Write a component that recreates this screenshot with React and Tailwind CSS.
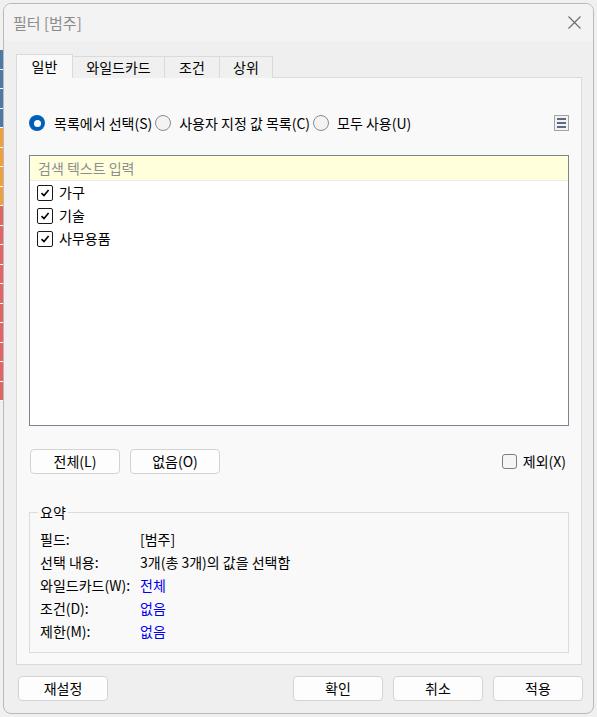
import React from 'react';

const FONT = { fontFamily: '"Noto Sans CJK KR", "Noto Sans", sans-serif' };

const TABS = [
  { label: '일반', w: 'w-[57px]', active: true },
  { label: '와일드카드', w: 'w-[93px]' },
  { label: '조건', w: 'w-[56px]' },
  { label: '상위', w: 'w-[54px]' },
];

const ITEMS = ['가구', '기술', '사무용품'];

const SUMMARY = [
  { label: '필드:', value: '[범주]' },
  { label: '선택 내용:', value: '3개(총 3개)의 값을 선택함' },
  { label: '와일드카드(W):', value: '전체', link: true },
  { label: '조건(D):', value: '없음', link: true },
  { label: '제한(M):', value: '없음', link: true },
];

function Radio({ checked }) {
  if (checked) {
    return (
      <span className="block w-[16px] h-[16px] rounded-full bg-[#005fb8] flex items-center justify-center shrink-0">
        <span className="block w-[7px] h-[7px] rounded-full bg-white" />
      </span>
    );
  }
  return <span className="block w-[16px] h-[16px] rounded-full border border-[#8a8a8a] bg-[#f3f3f3] shrink-0" />;
}

function CheckBox() {
  return (
    <span className="w-[16px] h-[16px] rounded-[2px] border border-[#1a1a1a] bg-white flex items-center justify-center shrink-0">
      <svg width="10" height="10" viewBox="0 0 10 10">
        <path d="M1.5 5.2 L4 7.6 L8.6 2" fill="none" stroke="#000" strokeWidth="1.6" />
      </svg>
    </span>
  );
}

function Btn({ children, className = '' }) {
  return (
    <button
      type="button"
      className={`h-[25px] w-[90px] rounded-[4px] border border-[#d3d3d3] bg-[#fdfdfd] text-[14px] text-black flex items-center justify-center ${className}`}
    >
      {children}
    </button>
  );
}

function LeftStrip() {
  const segs = [];
  for (let i = 0; i < 4; i++) segs.push('#4e79a7');
  for (let i = 0; i < 4; i++) segs.push('#f0a03a');
  for (let i = 0; i < 10; i++) segs.push('#e06666');
  return (
    <div className="w-[3px] flex flex-col shrink-0">
      <div className="h-[50px]" />
      {segs.map((c, i) => (
        <div key={i} className="h-[19.5px] border-b border-white" style={{ background: c }} />
      ))}
    </div>
  );
}

export default function App() {
  return (
    <div className="w-[597px] h-[717px] bg-[#f0f0f0] flex overflow-hidden" style={FONT}>
      <LeftStrip />
      <div className="mt-[3px] w-[591px] h-[711px] rounded-[8px] border border-[#b9b9b9] bg-[#efefef] flex flex-col overflow-hidden">
        {/* Title bar */}
        <div className="h-[37px] bg-[#f3f3f3] flex items-center justify-between pl-[9px] pr-[12px] shrink-0">
          <span className="text-[15px] text-[#8b8b8b] mt-[1px]">필터 [범주]</span>
          <svg width="13" height="13" viewBox="0 0 13 13">
            <path d="M0.5 0.5 L12.5 12.5 M12.5 0.5 L0.5 12.5" stroke="#6a6a6a" strokeWidth="1.1" />
          </svg>
        </div>

        {/* Tabs */}
        <div className="mt-[13px] ml-[12px] flex items-end h-[24px] relative z-10">
          {TABS.map(t => (
            <div
              key={t.label}
              className={`${t.w} flex items-center justify-center text-[14px] text-black border border-[#dadada] -ml-px first:ml-0 ${
                t.active ? 'h-[24px] bg-[#f9f9f9] border-b-[#f9f9f9]' : 'h-[22px] bg-[#f0f0f0] border-b-0'
              }`}
            >
              {t.label}
            </div>
          ))}
        </div>

        {/* Tab panel */}
        <div className="-mt-px ml-[12px] mr-[11px] h-[588px] border border-[#dadada] bg-[#f9f9f9] flex flex-col pl-[12px] pr-[12px]">
          {/* Radio row */}
          <div className="mt-[35px] h-[20px] flex items-center text-[14px] text-black">
            <Radio checked />
            <span className="ml-[9px]">목록에서 선택(S)</span>
            <span className="ml-[3px]"><Radio /></span>
            <span className="ml-[8px]">사용자 지정 값 목록(C)</span>
            <span className="ml-[3px]"><Radio /></span>
            <span className="ml-[8px]">모두 사용(U)</span>
            <div className="ml-auto w-[15px] h-[16px] border border-[#a3a3a3] bg-[#f2f2f2] flex flex-col items-center justify-center gap-[2px]">
              <span className="block w-[9px] h-[2px] bg-[#5d6b80]" />
              <span className="block w-[9px] h-[2px] bg-[#5d6b80]" />
              <span className="block w-[9px] h-[2px] bg-[#5d6b80]" />
            </div>
          </div>

          {/* List box */}
          <div className="mt-[22px] h-[271px] border border-[#7f8494] bg-white flex flex-col">
            <div className="h-[25px] bg-[#ffffdc] border-b border-[#ececec] flex items-center px-[8px] text-[14px] text-[#8d8d8d]">
              검색 텍스트 입력
            </div>
            <div className="flex flex-col">
              {ITEMS.map(it => (
                <div key={it} className="h-[23px] flex items-center pl-[7px] gap-[6px] text-[14px] text-black">
                  <CheckBox />
                  <span>{it}</span>
                </div>
              ))}
            </div>
          </div>

          {/* All / None / Exclude */}
          <div className="mt-[22px] h-[26px] flex items-center">
            <Btn className="ml-[1px]">전체(L)</Btn>
            <Btn className="ml-[10px]">없음(O)</Btn>
            <div className="ml-auto mr-[3px] flex items-center gap-[6px] text-[14px] text-black">
              <span className="block w-[15px] h-[15px] rounded-[3px] border border-[#7d7d7d] bg-[#f5f5f5]" />
              <span>제외(X)</span>
            </div>
          </div>

          {/* Summary group */}
          <div className="mt-[38px] h-[141px] border border-[#dcdcdc] relative flex flex-col pl-[10px] pt-[15px]">
            <span className="absolute -top-[11px] left-[8px] px-[2px] bg-[#f9f9f9] text-[14px] text-black leading-[20px]">요약</span>
            {SUMMARY.map(r => (
              <div key={r.label} className="h-[23px] flex items-center text-[14px]">
                <span className="w-[100px] text-black">{r.label}</span>
                <span className={r.link ? 'text-[#0000ee]' : 'text-black'}>{r.value}</span>
              </div>
            ))}
          </div>
        </div>

        {/* Bottom buttons */}
        <div className="mt-[11px] ml-[14px] mr-[10px] flex items-center">
          <Btn>재설정</Btn>
          <Btn className="ml-auto">확인</Btn>
          <Btn className="ml-[10px]">취소</Btn>
          <Btn className="ml-[10px]">적용</Btn>
        </div>
      </div>
    </div>
  );
}
